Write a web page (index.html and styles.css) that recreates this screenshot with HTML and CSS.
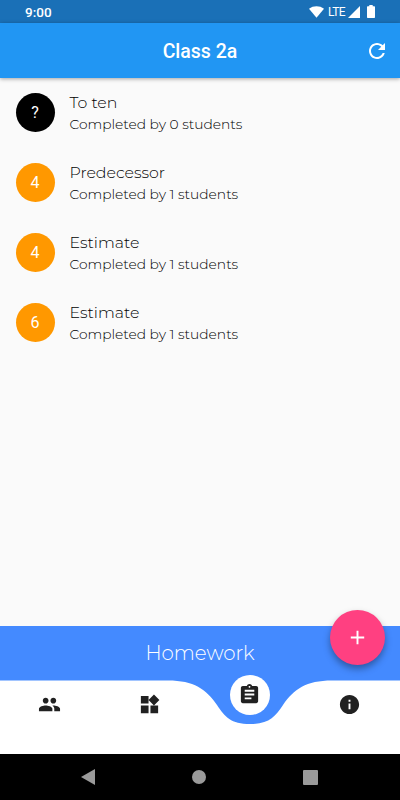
FILE: index.html
```html
<!DOCTYPE html>
<html lang="en">
<head>
  <meta charset="UTF-8" />
  <meta name="viewport" content="width=device-width, initial-scale=1.0" />
  <title>Class 2a</title>
  <link rel="stylesheet" href="styles.css">
</head>
<body>
  <div class="status-bar">
    <span class="clock">9:00</span>
    <div class="status-icons">
      <svg class="wifi" width="15" height="12" viewBox="0 0 16 12"><path d="M0 2.6C4.6-.9 11.4-.9 16 2.6L8 12z"/></svg>
      <span class="network">LTE</span>
      <svg class="signal" width="12" height="12" viewBox="0 0 12 12"><path d="M12 0v12H0z"/></svg>
      <svg class="battery" width="8" height="13" viewBox="0 0 8 13"><path d="M2.3 0h3.4v1.3H7.3q.7 0 .7.7v10.3q0 .7-.7.7H.7Q0 13 0 12.300V2q0-.7.7-.7h1.600z"/></svg>
    </div>
  </div>

  <header class="app-bar">
    <h1>Class 2a</h1>
    <button class="refresh" aria-label="Refresh">
      <svg width="24" height="24" viewBox="0 0 24 24"><path d="M17.65 6.35C16.2 4.9 14.21 4 12 4c-4.420 0-7.990 3.580-7.990 8s3.570 8 7.990 8c3.730 0 6.840-2.550 7.730-6h-2.080c-.82 2.330-3.040 4-5.650 4-3.310 0-6-2.690-6-6s2.690-6 6-6c1.660 0 3.140.69 4.220 1.780L13 11h7V4l-2.350 2.350z"/></svg>
    </button>
  </header>

  <main class="list">
    <div class="item">
      <div class="avatar unknown">?</div>
      <div class="info">
        <div class="title">To ten</div>
        <div class="subtitle">Completed by 0 students</div>
      </div>
    </div>
    <div class="item">
      <div class="avatar">4</div>
      <div class="info">
        <div class="title">Predecessor</div>
        <div class="subtitle">Completed by 1 students</div>
      </div>
    </div>
    <div class="item">
      <div class="avatar">4</div>
      <div class="info">
        <div class="title">Estimate</div>
        <div class="subtitle">Completed by 1 students</div>
      </div>
    </div>
    <div class="item">
      <div class="avatar">6</div>
      <div class="info">
        <div class="title">Estimate</div>
        <div class="subtitle">Completed by 1 students</div>
      </div>
    </div>
  </main>

  <section class="banner">
    <h2>Homework</h2>
    <button class="fab" aria-label="Add">
      <svg width="24" height="24" viewBox="0 0 24 24"><path d="M19 13h-6v6h-2v-6H5v-2h6V5h2v6h6v2z"/></svg>
    </button>
  </section>

  <nav class="tabs">
    <!-- white bar with the dip under the active tab -->
    <svg class="curve" width="400" height="74" viewBox="0 0 400 74"><path d="M0 .5H168C194 .5 206 9 217 25C225 37 231 44 250 44S275 37 283 25C294 9 306 .5 332 .5H400V74H0z"/></svg>
    <a class="tab"><svg width="23" height="23" viewBox="0 0 24 24"><path d="M16 11c1.660 0 2.990-1.340 2.990-3S17.660 5 16 5s-3 1.340-3 3 1.340 3 3 3zm-8 0c1.660 0 2.990-1.340 2.990-3S9.660 5 8 5 5 6.340 5 8s1.340 3 3 3zm0 2c-2.330 0-7 1.170-7 3.500V19h14v-2.500c0-2.330-4.670-3.500-7-3.500zm8 0c-.29 0-.62.02-.97.05 1.160.84 1.970 1.970 1.970 3.450V19h6v-2.500c0-2.330-4.670-3.500-7-3.500z"/></svg></a>
    <a class="tab"><svg width="23" height="23" viewBox="0 0 24 24"><path d="M13 13v8h8v-8h-8zM3 21h8v-8H3v8zM3 3v8h8V3H3zm13.660-1.310L11 7.340 16.660 13l5.660-5.660-5.660-5.650z"/></svg></a>
    <a class="tab active"><svg width="23" height="23" viewBox="0 0 24 24"><path d="M19 3h-4.180C14.400 1.840 13.300 1 12 1c-1.300 0-2.400.84-2.820 2H5c-1.100 0-2 .9-2 2v14c0 1.100.9 2 2 2h14c1.100 0 2-.9 2-2V5c0-1.100-.9-2-2-2zm-7 0c.55 0 1 .45 1 1s-.45 1-1 1-1-.45-1-1 .45-1 1-1zm2 14H7v-2h7v2zm3-4H7v-2h10v2zm0-4H7V7h10v2z"/></svg></a>
    <a class="tab"><svg width="23" height="23" viewBox="0 0 24 24"><path d="M12 2C6.480 2 2 6.480 2 12s4.480 10 10 10 10-4.480 10-10S17.520 2 12 2zm1 15h-2v-6h2v6zm0-8h-2V7h2v2z"/></svg></a>
  </nav>

  <footer class="system-nav">
    <svg width="14" height="16" viewBox="0 0 14 16"><path d="M14 0v16L0 8z"/></svg>
    <svg width="14" height="14" viewBox="0 0 14 14"><circle cx="7" cy="7" r="7"/></svg>
    <svg width="15" height="15" viewBox="0 0 15 15"><rect width="15" height="15" rx="1"/></svg>
  </footer>
</body>
</html>
```
FILE: styles.css
```css
* {
  box-sizing: border-box;
}
body {
  margin: 0;
  height: 800px;
  display: flex;
  flex-direction: column;
  font-family: Montserrat, Inter, 'Open Sans', sans-serif;
  background-color: #fafafa;
  overflow: hidden;
}
svg {
  display: block;
  fill: currentColor;
}
button {
  padding: 0;
  border: none;
  background: none;
  color: white;
  cursor: pointer;
}
.status-bar {
  height: 23px;
  padding: 0 25px 0 25px;
  display: flex;
  align-items: center;
  justify-content: space-between;
  background-color: #1a70b7;
  color: white;
  font-family: Roboto, sans-serif;
}
.clock {
  font-size: 13.5px;
  font-weight: 500;
  padding-top: 1px;
}
.status-icons {
  display: flex;
  align-items: center;
}
.network {
  font-size: 12px;
  margin: 0 3px 0 4px;
  letter-spacing: -0.6px;
}
.battery {
  margin-left: 7px;
}
.app-bar {
  height: 55px;
  flex-shrink: 0;
  display: grid;
  grid-template-columns: 1fr auto 1fr;
  align-items: center;
  padding: 0 11px;
  background-color: #2196f3;
  color: white;
  box-shadow: 0 1px 4px rgba(0,0,0,0.35);
  z-index: 1;
}
h1 {
  grid-column: 2;
  margin: 0;
  padding-top: 2px;
  font-family: Roboto, sans-serif;
  font-size: 19.5px;
  font-weight: 500;
}
.refresh {
  justify-self: end;
}
.list {
  flex: 1;
}
.item {
  height: 70px;
  display: flex;
  align-items: center;
  gap: 15px;
  padding: 0 15.5px;
}
.avatar {
  width: 39px;
  height: 39px;
  margin-bottom: 1px;
  border-radius: 50%;
  display: flex;
  align-items: center;
  justify-content: center;
  background-color: #ff9800;
  color: white;
  font-family: Roboto, sans-serif;
  font-size: 16px;
}
.unknown {
  background-color: black;
}
.title {
  font-size: 15.8px;
  font-weight: 300;
  line-height: 22px;
  color: black;
}
.subtitle {
  font-size: 13.8px;
  font-weight: 300;
  line-height: 20px;
  color: black;
}
.banner {
  position: relative;
  height: 54px;
  display: flex;
  align-items: center;
  justify-content: center;
  background-color: #448aff;
  color: white;
}
h2 {
  margin: 0;
  font-size: 19.8px;
  font-weight: 300;
}
.fab {
  position: absolute;
  right: 15px;
  top: -16px;
  width: 55px;
  height: 55px;
  border-radius: 50%;
  display: flex;
  align-items: center;
  justify-content: center;
  background-color: #ff4081;
  box-shadow: 0 4px 7px rgba(0,0,0,0.35);
}
.fab svg {
  width: 23px;
  height: 23px;
  margin-right: 1px;
}
.tabs {
  position: relative;
  height: 73px;
  display: grid;
  grid-template-columns: repeat(4, 1fr);
  justify-items: center;
  align-items: start;
  background-color: #448aff;
  color: #212121;
}
.curve {
  position: absolute;
  left: 0;
  top: 0;
  fill: white;
}
.tab {
  position: relative;
  padding: 13px 1px 0 0;
}
.tab.active {
  width: 40px;
  height: 40px;
  margin-top: -5px;
  padding: 8px 0 0 8px;
  border-radius: 50%;
  background-color: white;
}
.system-nav {
  height: 47px;
  display: flex;
  align-items: center;
  justify-content: center;
  gap: 97px;
  padding-right: 1px;
  border-top: 1px solid #777;
  background-color: black;
  color: #9a9a9a;
}
```
